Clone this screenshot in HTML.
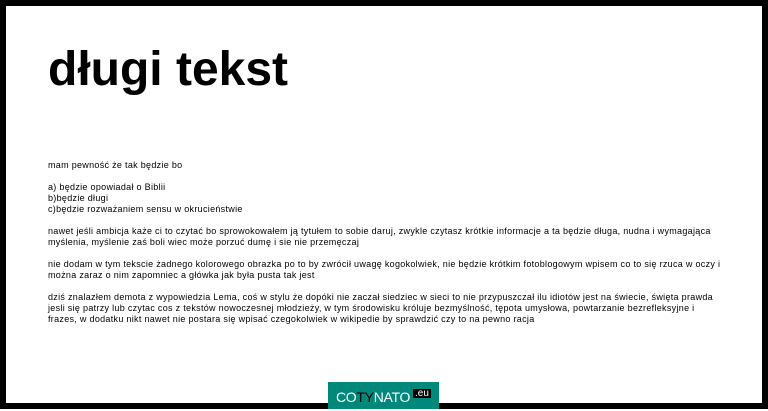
<!DOCTYPE html>
<html><head><meta charset="utf-8"><style>
html,body{margin:0;padding:0;background:#fff;}
body{width:768px;height:409px;position:relative;overflow:hidden;font-family:"Liberation Sans",Arial,sans-serif;}
.frame{position:absolute;left:0;top:0;width:756px;height:397px;border:6px solid #000;}
h1{position:absolute;left:48px;top:40px;margin:0;font-size:48px;font-weight:bold;line-height:60px;color:#000;letter-spacing:0;}
.txt{position:absolute;left:48px;top:160px;width:674px;font-size:9px;line-height:11px;color:#000;letter-spacing:0.3px;}
.txt p{margin:0 0 11px 0;}
.logo{position:absolute;left:328px;top:382px;width:111px;height:27px;background:#00897a;color:#fff;font-size:14px;line-height:27px;}
.logo span.t{position:absolute;left:8px;top:2px;letter-spacing:-0.3px;}
.logo .eu{position:absolute;left:85px;top:7px;background:#000;color:#fff;font-size:10px;line-height:9px;padding:0 2px;}
</style></head><body>
<div class="frame"></div>
<h1>długi tekst</h1>
<div class="txt">
<p>mam pewność że tak będzie bo</p>
<p>a) będzie opowiadał o Biblii<br>b)będzie długi<br>c)będzie rozważaniem sensu w okrucieństwie</p>
<p>nawet jeśli ambicja każe ci to czytać bo sprowokowałem ją tytułem to sobie daruj, zwykle czytasz krótkie informacje a ta będzie długa, nudna i wymagająca myślenia, myślenie zaś boli wiec może porzuć dumę i sie nie przemęczaj</p>
<p>nie dodam w tym tekscie żadnego kolorowego obrazka po to by zwrócił uwagę kogokolwiek, nie będzie krótkim fotoblogowym wpisem co to się rzuca w oczy i można zaraz o nim zapomniec a główka jak była pusta tak jest</p>
<p>dziś znalazłem demota z wypowiedzia Lema, coś w stylu że dopóki nie zaczał siedziec w sieci to nie przypuszczał ilu idiotów jest na świecie, święta prawda jesli się patrzy lub czytac cos z tekstów nowoczesnej młodzieży, w tym środowisku króluje bezmyślność, tępota umysłowa, powtarzanie bezrefleksyjne i frazes, w dodatku nikt nawet nie postara się wpisać czegokolwiek w wikipedie by sprawdzić czy to na pewno racja</p>
</div>
<div class="logo"><span class="t">CO<span style="color:#000">TY</span>NATO</span><span class="eu">.eu</span></div>
</body></html>
